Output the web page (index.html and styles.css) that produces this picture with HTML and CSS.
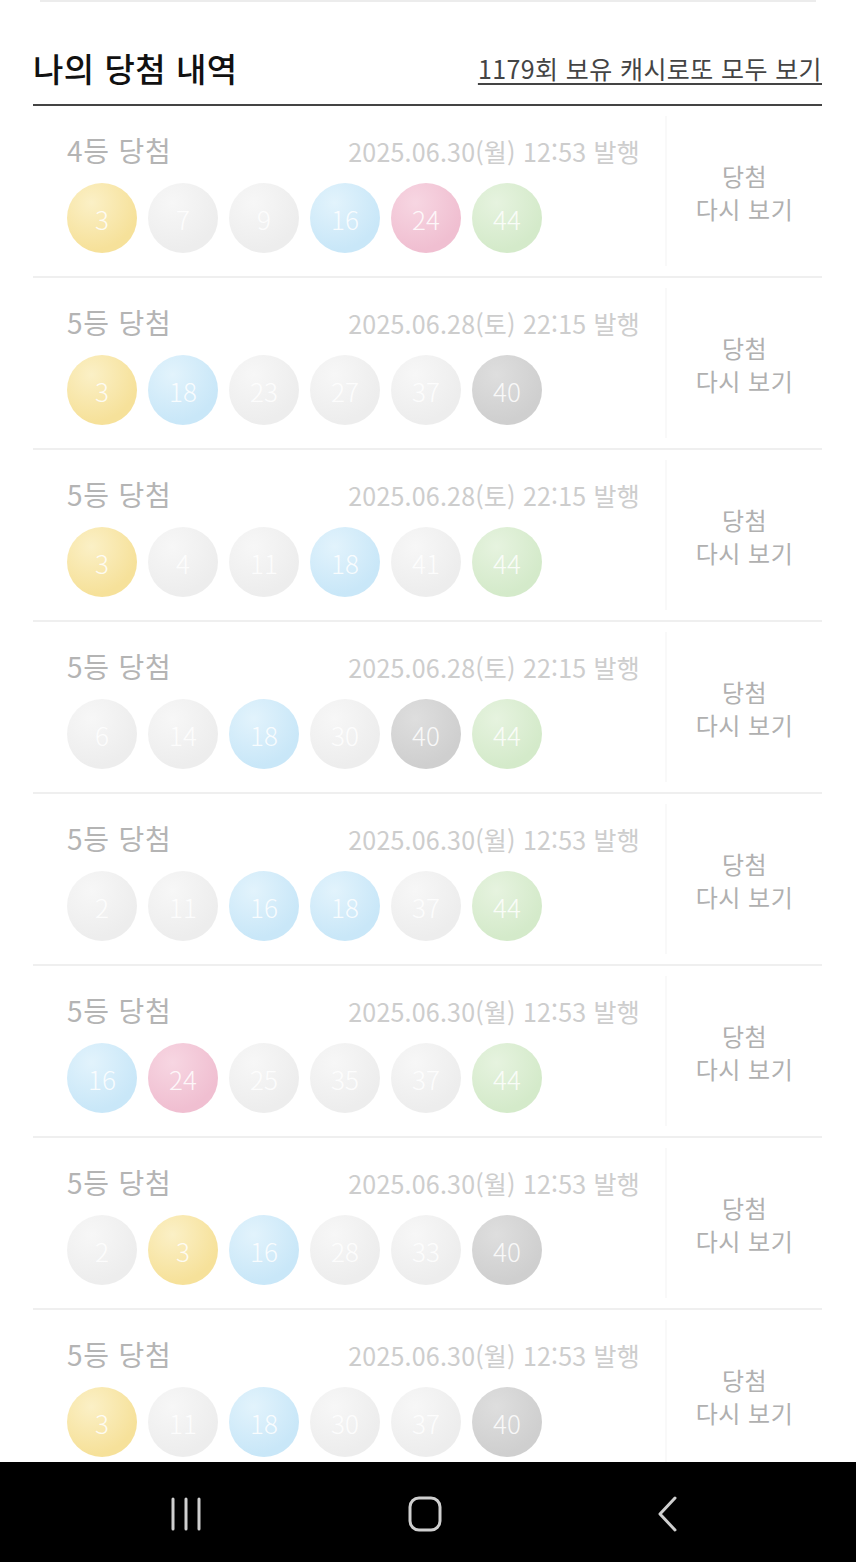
FILE: index.html
```html
<!DOCTYPE html>
<html lang="ko">

<head>
    <meta charset="UTF-8">
    <meta name="viewport" content="width=device-width, initial-scale=1.0">
    <title>나의 당첨 내역</title>

    <link rel="stylesheet" href="styles.css">
</head>

<body>

    <div class="top-line"></div>

    <section class="history">
        <header class="history-head">
            <h2>나의 당첨 내역</h2>
            <a href="#">1179회 보유 캐시로또 모두 보기</a>
        </header>

        <div class="win-row">
            <div class="win-main">
                <div class="win-info">
                    <span class="rank">4등 당첨</span>
                    <span class="date">2025.06.30(월) 12:53 발행</span>
                </div>
                <div class="balls">
                    <span class="ball yellow">3</span>
                    <span class="ball">7</span>
                    <span class="ball">9</span>
                    <span class="ball blue">16</span>
                    <span class="ball pink">24</span>
                    <span class="ball green">44</span>
                </div>
            </div>
            <a class="win-again" href="#">당첨<br>다시 보기</a>
        </div>

        <div class="win-row">
            <div class="win-main">
                <div class="win-info">
                    <span class="rank">5등 당첨</span>
                    <span class="date">2025.06.28(토) 22:15 발행</span>
                </div>
                <div class="balls">
                    <span class="ball yellow">3</span>
                    <span class="ball blue">18</span>
                    <span class="ball">23</span>
                    <span class="ball">27</span>
                    <span class="ball">37</span>
                    <span class="ball gray">40</span>
                </div>
            </div>
            <a class="win-again" href="#">당첨<br>다시 보기</a>
        </div>

        <div class="win-row">
            <div class="win-main">
                <div class="win-info">
                    <span class="rank">5등 당첨</span>
                    <span class="date">2025.06.28(토) 22:15 발행</span>
                </div>
                <div class="balls">
                    <span class="ball yellow">3</span>
                    <span class="ball">4</span>
                    <span class="ball">11</span>
                    <span class="ball blue">18</span>
                    <span class="ball">41</span>
                    <span class="ball green">44</span>
                </div>
            </div>
            <a class="win-again" href="#">당첨<br>다시 보기</a>
        </div>

        <div class="win-row">
            <div class="win-main">
                <div class="win-info">
                    <span class="rank">5등 당첨</span>
                    <span class="date">2025.06.28(토) 22:15 발행</span>
                </div>
                <div class="balls">
                    <span class="ball">6</span>
                    <span class="ball">14</span>
                    <span class="ball blue">18</span>
                    <span class="ball">30</span>
                    <span class="ball gray">40</span>
                    <span class="ball green">44</span>
                </div>
            </div>
            <a class="win-again" href="#">당첨<br>다시 보기</a>
        </div>

        <div class="win-row">
            <div class="win-main">
                <div class="win-info">
                    <span class="rank">5등 당첨</span>
                    <span class="date">2025.06.30(월) 12:53 발행</span>
                </div>
                <div class="balls">
                    <span class="ball">2</span>
                    <span class="ball">11</span>
                    <span class="ball blue">16</span>
                    <span class="ball blue">18</span>
                    <span class="ball">37</span>
                    <span class="ball green">44</span>
                </div>
            </div>
            <a class="win-again" href="#">당첨<br>다시 보기</a>
        </div>

        <div class="win-row">
            <div class="win-main">
                <div class="win-info">
                    <span class="rank">5등 당첨</span>
                    <span class="date">2025.06.30(월) 12:53 발행</span>
                </div>
                <div class="balls">
                    <span class="ball blue">16</span>
                    <span class="ball pink">24</span>
                    <span class="ball">25</span>
                    <span class="ball">35</span>
                    <span class="ball">37</span>
                    <span class="ball green">44</span>
                </div>
            </div>
            <a class="win-again" href="#">당첨<br>다시 보기</a>
        </div>

        <div class="win-row">
            <div class="win-main">
                <div class="win-info">
                    <span class="rank">5등 당첨</span>
                    <span class="date">2025.06.30(월) 12:53 발행</span>
                </div>
                <div class="balls">
                    <span class="ball">2</span>
                    <span class="ball yellow">3</span>
                    <span class="ball blue">16</span>
                    <span class="ball">28</span>
                    <span class="ball">33</span>
                    <span class="ball gray">40</span>
                </div>
            </div>
            <a class="win-again" href="#">당첨<br>다시 보기</a>
        </div>

        <div class="win-row">
            <div class="win-main">
                <div class="win-info">
                    <span class="rank">5등 당첨</span>
                    <span class="date">2025.06.30(월) 12:53 발행</span>
                </div>
                <div class="balls">
                    <span class="ball yellow">3</span>
                    <span class="ball">11</span>
                    <span class="ball blue">18</span>
                    <span class="ball">30</span>
                    <span class="ball">37</span>
                    <span class="ball gray">40</span>
                </div>
            </div>
            <a class="win-again" href="#">당첨<br>다시 보기</a>
        </div>
    </section>

    <!-- android navigation bar -->
    <footer class="nav-bar">
        <svg width="32" height="34" viewBox="0 0 32 34">
            <path d="M3 2v30M16 2v30M29 2v30" stroke="#cfcfcf" stroke-width="3" stroke-linecap="round" fill="none" />
        </svg>
        <svg width="34" height="36" viewBox="0 0 34 36">
            <rect x="2" y="2" width="30" height="32" rx="9" stroke="#cfcfcf" stroke-width="3" fill="none" />
        </svg>
        <svg width="22" height="36" viewBox="0 0 22 36">
            <path d="M19 2L4 18l15 16" stroke="#cfcfcf" stroke-width="3" stroke-linecap="round" stroke-linejoin="round" fill="none" />
        </svg>
    </footer>

</body>

</html>
```

FILE: styles.css
```css
body {
    font-family: "Noto Sans CJK KR", "Noto Sans", sans-serif;
    margin: 0;
    height: 1562px;
    overflow: hidden;
    background-color: #fff;
}

.top-line {
    margin: 0 40px;
    height: 2px;
    background-color: #ececec;
}

.history {
    margin: 0 34px 0 33px;
}

.history-head {
    display: flex;
    justify-content: space-between;
    align-items: center;
    height: 60px;
    margin-top: 36px;
    padding-bottom: 6px;
    border-bottom: 2px solid #444;
}

.history-head h2 {
    margin: 0;
    font-size: 33px;
    font-weight: 500;
    color: #111;
    letter-spacing: 0.5px;
}

.history-head a {
    font-size: 25px;
    color: #444;
    text-decoration: underline;
    text-underline-offset: 4px;
    letter-spacing: 0.4px;
}

.win-row {
    display: flex;
    height: 170px;
    border-bottom: 2px solid #efefef;
}

.win-main {
    flex: 1;
    padding: 26px 25px 0 34px;
}

.win-info {
    display: flex;
    justify-content: space-between;
    align-items: baseline;
    height: 36px;
    line-height: 36px;
}

.rank {
    font-size: 28px;
    color: #b4b4b4;
    letter-spacing: 0.8px;
}

.date {
    font-size: 25px;
    color: #cdcdcd;
    letter-spacing: 0.2px;
}

.balls {
    display: flex;
    gap: 11px;
    margin-top: 15px;
}

.ball {
    width: 70px;
    height: 70px;
    border-radius: 50%;
    display: flex;
    align-items: center;
    justify-content: center;
    font-size: 26px;
    font-weight: 300;
    color: rgba(255, 255, 255, 0.85);
    background: radial-gradient(circle at 35% 28%, #f7f7f7, #ededed 70%);
}

.ball.yellow {
    background: radial-gradient(circle at 35% 28%, #fbf0c6, #f6e19a 70%);
}

.ball.blue {
    background: radial-gradient(circle at 35% 28%, #e2f3fc, #c9e7f8 70%);
}

.ball.pink {
    background: radial-gradient(circle at 35% 28%, #f7d6e2, #f0bfd1 70%);
}

.ball.green {
    background: radial-gradient(circle at 35% 28%, #e6f3df, #d4eaca 70%);
}

.ball.gray {
    background: radial-gradient(circle at 35% 28%, #dedede, #cfcfcf 70%);
}

.win-again {
    width: 155px;
    margin: 10px 0;
    padding-top: 2px;
    border-left: 2px solid #f9f9f9;
    display: flex;
    align-items: center;
    justify-content: center;
    text-align: center;
    font-size: 24px;
    line-height: 33px;
    color: #b0b0b0;
    letter-spacing: 0.5px;
    text-decoration: none;
}

.nav-bar {
    position: fixed;
    left: 0;
    bottom: 0;
    width: 100%;
    height: 100px;
    background-color: #000;
    display: flex;
    align-items: center;
    padding-top: 4px;
    box-sizing: border-box;
}

.nav-bar svg:nth-child(1) {
    margin-left: 170px;
}

.nav-bar svg:nth-child(2) {
    margin-left: 206px;
}

.nav-bar svg:nth-child(3) {
    margin-left: 214px;
}
```
